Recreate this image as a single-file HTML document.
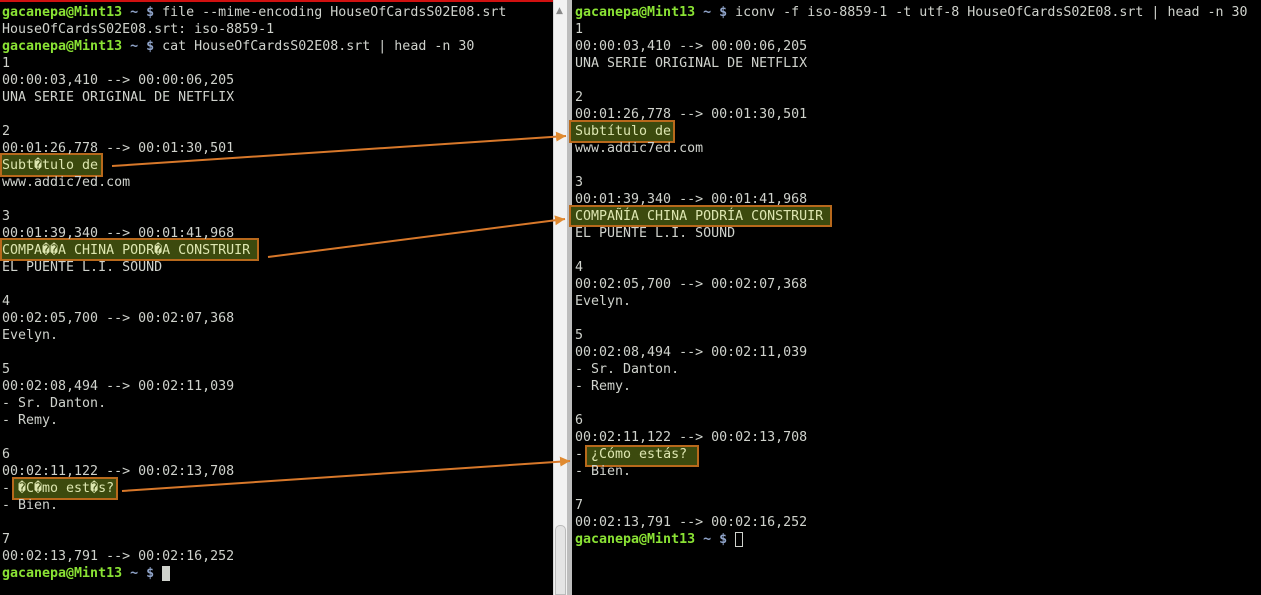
<!DOCTYPE html>
<html><head><meta charset="utf-8"><style>
html,body{margin:0;padding:0;width:1261px;height:595px;overflow:hidden;background:#000;}
.pane{position:absolute;top:0;height:595px;background:#000;}
pre{position:absolute;margin:0;font-family:"DejaVu Sans Mono","Liberation Mono",monospace;font-size:13.3px;line-height:17px;color:#cfd2cc;z-index:2;}
.g{color:#8ae234;font-weight:bold}
.b{color:#8fa3c8;font-weight:bold}
.hl{color:#dde6b0}
.box{position:absolute;background:#3c4a0e;border:2px solid #b8691c;box-sizing:border-box;z-index:1;}
</style></head><body>
<div class="pane" style="left:0;width:553px;border-top:2px solid #d01010;box-sizing:border-box;"></div>
<div style="position:absolute;left:553px;top:0;width:14px;height:595px;background:#f2f2f2;border-left:1px solid #d8d8d8;box-sizing:border-box"></div>
<div style="position:absolute;left:567px;top:0;width:5px;height:595px;background:#bdbdbd"></div>
<div style="position:absolute;left:555px;top:525px;width:11px;height:70px;background:#e4e4e4;border:1px solid #bbb;border-radius:5px 5px 0 0;box-sizing:border-box"></div>
<div style="position:absolute;left:556px;top:6px;color:#888;font-size:9px;font-family:'DejaVu Sans'">▲</div>

<div class="box" style="left:0;top:153px;width:103px;height:24px"></div>
<div class="box" style="left:0;top:238px;width:259px;height:23px"></div>
<div class="box" style="left:12px;top:477px;width:106px;height:23px"></div>
<div class="box" style="left:569px;top:120px;width:106px;height:23px"></div>
<div class="box" style="left:569px;top:205px;width:263px;height:22px"></div>
<div class="box" style="left:585px;top:445px;width:114px;height:22px"></div>

<pre style="left:2px;top:4px"><span class="g">gacanepa@Mint13</span> <span class="b">~ $</span> file --mime-encoding HouseOfCardsS02E08.srt
HouseOfCardsS02E08.srt: iso-8859-1
<span class="g">gacanepa@Mint13</span> <span class="b">~ $</span> cat HouseOfCardsS02E08.srt | head -n 30
1
00:00:03,410 --&gt; 00:00:06,205
UNA SERIE ORIGINAL DE NETFLIX

2
00:01:26,778 --&gt; 00:01:30,501
<span class="hl">Subt�tulo de</span>
www.addic7ed.com

3
00:01:39,340 --&gt; 00:01:41,968
<span class="hl">COMPA��A CHINA PODR�A CONSTRUIR</span>
EL PUENTE L.I. SOUND

4
00:02:05,700 --&gt; 00:02:07,368
Evelyn.

5
00:02:08,494 --&gt; 00:02:11,039
- Sr. Danton.
- Remy.

6
00:02:11,122 --&gt; 00:02:13,708
- <span class="hl">�C�mo est�s?</span>
- Bien.

7
00:02:13,791 --&gt; 00:02:16,252
<span class="g">gacanepa@Mint13</span> <span class="b">~ $</span> <span style="background:#cfd2cc">&#160;</span></pre>

<pre style="left:575px;top:4px"><span class="g">gacanepa@Mint13</span> <span class="b">~ $</span> iconv -f iso-8859-1 -t utf-8 HouseOfCardsS02E08.srt | head -n 30
1
00:00:03,410 --&gt; 00:00:06,205
UNA SERIE ORIGINAL DE NETFLIX

2
00:01:26,778 --&gt; 00:01:30,501
<span class="hl">Subtítulo de</span>
www.addic7ed.com

3
00:01:39,340 --&gt; 00:01:41,968
<span class="hl">COMPAÑÍA CHINA PODRÍA CONSTRUIR</span>
EL PUENTE L.I. SOUND

4
00:02:05,700 --&gt; 00:02:07,368
Evelyn.

5
00:02:08,494 --&gt; 00:02:11,039
- Sr. Danton.
- Remy.

6
00:02:11,122 --&gt; 00:02:13,708
- <span class="hl">¿Cómo estás?</span>
- Bien.

7
00:02:13,791 --&gt; 00:02:16,252
<span class="g">gacanepa@Mint13</span> <span class="b">~ $</span> <span style="outline:1px solid #cfd2cc;outline-offset:-1px">&#160;</span></pre>

<svg style="position:absolute;left:0;top:0;z-index:3" width="1261" height="595">
<defs><marker id="a" markerWidth="6" markerHeight="6" refX="5" refY="3" orient="auto"><path d="M0,0.5 L5,3 L0,5.5 Z" fill="#e08a30"/></marker></defs>
<g stroke="#d8782a" stroke-width="2" fill="none" marker-end="url(#a)">
<line x1="112" y1="166" x2="566" y2="136"/>
<line x1="268" y1="257" x2="565" y2="219"/>
<line x1="122" y1="491" x2="570" y2="461"/>
</g></svg>
</body></html>
